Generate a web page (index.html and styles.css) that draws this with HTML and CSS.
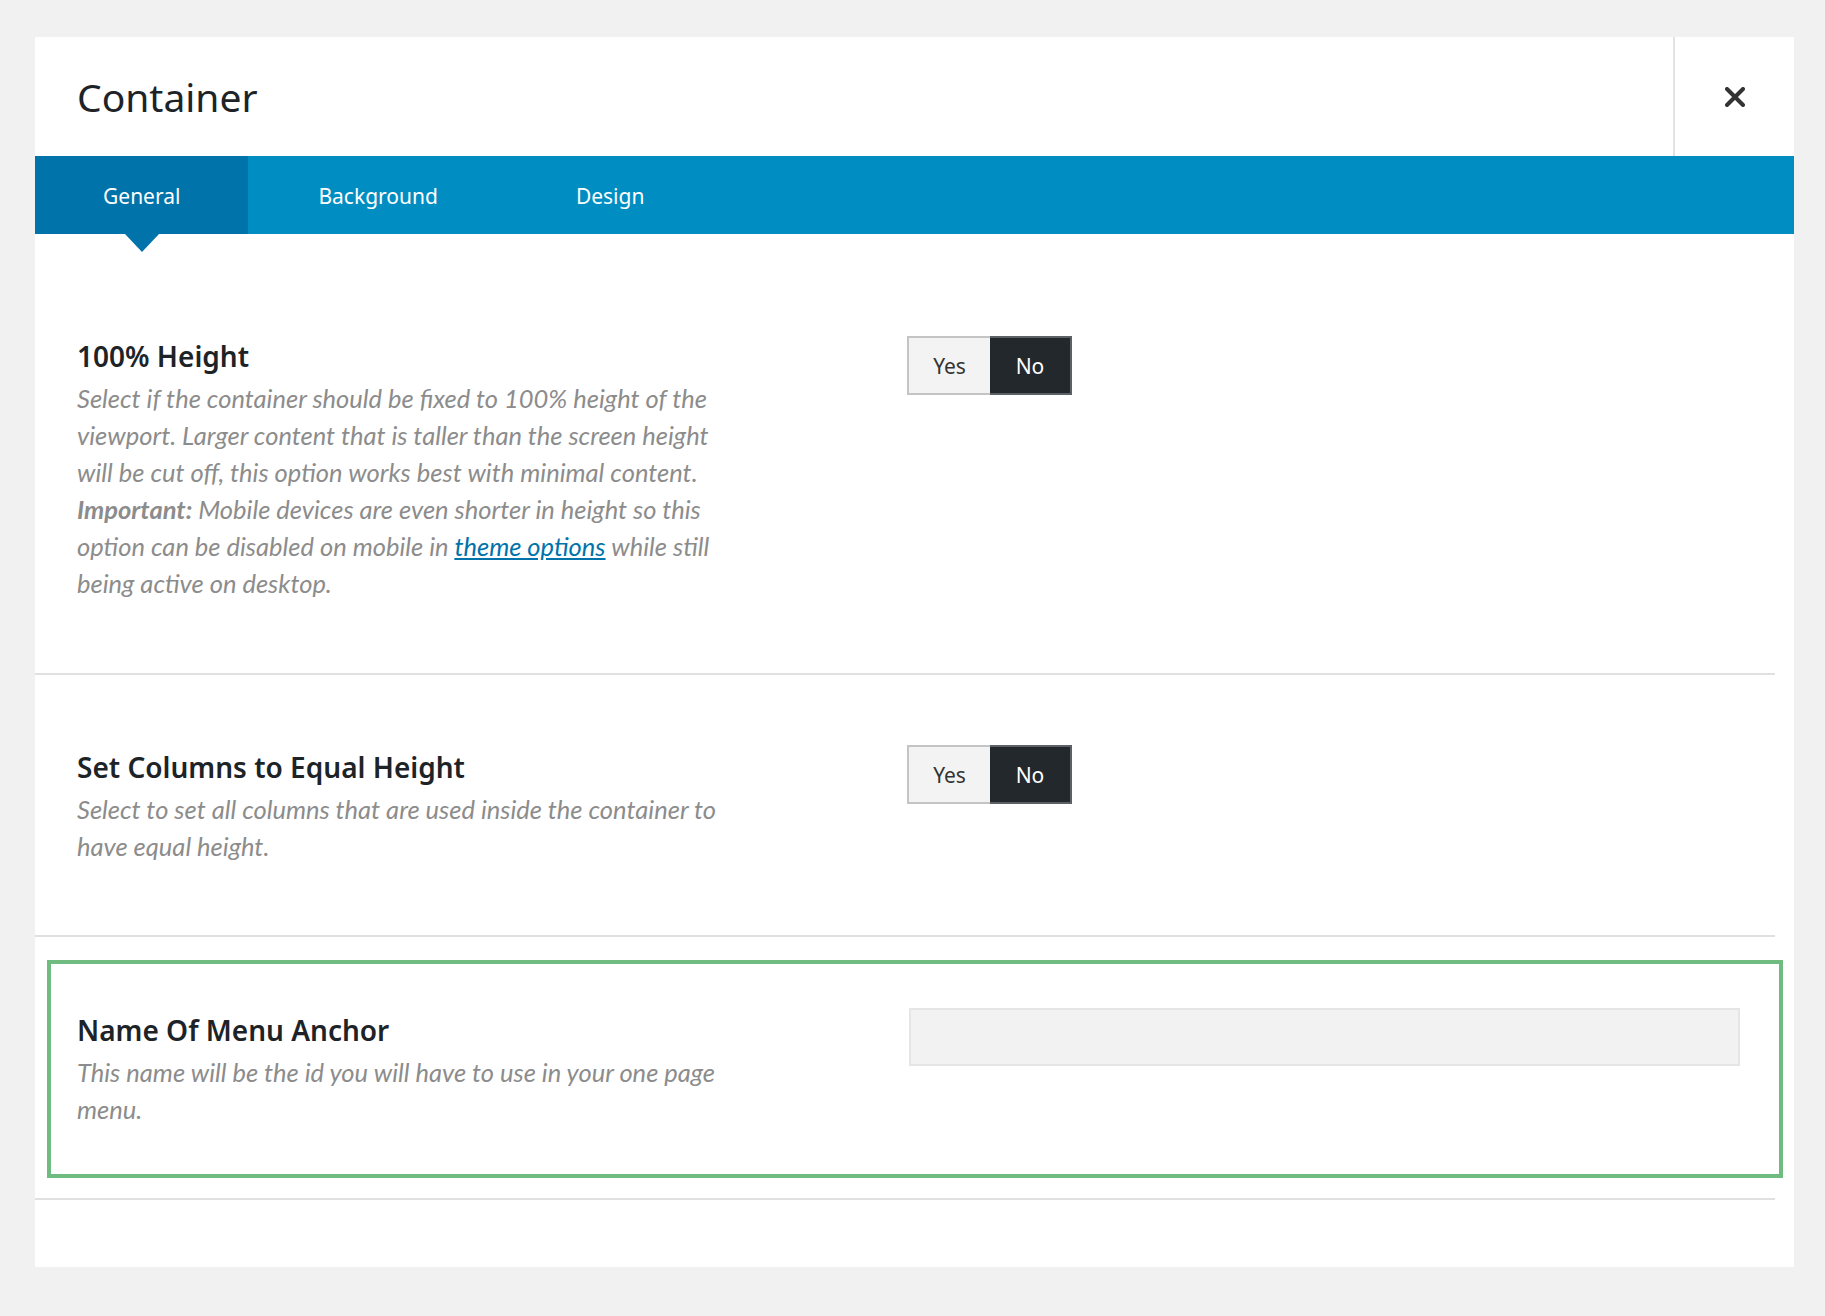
FILE: index.html
```html
<!DOCTYPE html>
<html lang="en">
<head>
    <meta charset="UTF-8">
    <meta name="viewport" content="width=device-width, initial-scale=1.0">
    <title>Container</title>
    <link rel="stylesheet" href="styles.css">
</head>
<body>
    <div class="modal">
        <div class="modal-header">
            <h1>Container</h1>
            <button class="close" aria-label="Close">
                <svg width="20" height="20" viewBox="0 0 20 20">
                    <path d="M2 2 L18 18 M18 2 L2 18" stroke="#333" stroke-width="4" stroke-linecap="round"/>
                </svg>
            </button>
        </div>

        <div class="tabs">
            <a class="tab active">General</a>
            <a class="tab">Background</a>
            <a class="tab">Design</a>
        </div>

        <div class="content">
            <div class="option first">
                <div class="option-info">
                    <h3>100% Height</h3>
                    <p>Select if the container should be fixed to 100% height of the viewport. Larger content that is taller than the screen height will be cut off, this option works best with minimal content. <strong>Important:</strong> Mobile devices are even shorter in height so this option can be disabled on mobile in <a href="#">theme options</a> while still being active on desktop.</p>
                </div>
                <div class="toggle">
                    <span class="yes">Yes</span>
                    <span class="no">No</span>
                </div>
            </div>

            <div class="option">
                <div class="option-info">
                    <h3>Set Columns to Equal Height</h3>
                    <p>Select to set all columns that are used inside the container to have equal height.</p>
                </div>
                <div class="toggle">
                    <span class="yes">Yes</span>
                    <span class="no">No</span>
                </div>
            </div>

            <div class="option-wrap">
                <div class="option highlight">
                    <div class="option-info">
                        <h3>Name Of Menu Anchor</h3>
                        <p>This name will be the id you will have to use in your one page menu.</p>
                    </div>
                    <div>
                        <input type="text" class="text-input">
                    </div>
                </div>
            </div>
        </div>
    </div>
</body>
</html>
```

FILE: styles.css
```css
body {
    margin: 0;
    background-color: #f1f1f1;
    font-family: 'Noto Sans', 'Open Sans', sans-serif;
    min-height: 1316px;
}

.modal {
    width: 1759px;
    margin: 37px 0 0 35px;
    background: #fff;
    padding-bottom: 67px;
}

.modal-header {
    display: flex;
    height: 119px;
}

.modal-header h1 {
    flex: 1;
    margin: 0;
    padding-left: 42px;
    display: flex;
    align-items: center;
    font-size: 39px;
    font-weight: 400;
    color: #1d2327;
}

.close {
    width: 121px;
    border: none;
    border-left: 2px solid #e2e2e2;
    background: #fff;
    display: flex;
    align-items: center;
    justify-content: center;
    padding: 0;
    cursor: pointer;
}

/* tabs */
.tabs {
    display: flex;
    height: 78px;
    background-color: #008ec2;
}

.tab {
    position: relative;
    padding: 0 68px;
    line-height: 80px;
    font-size: 21px;
    color: #fff;
    cursor: pointer;
}

.tab + .tab {
    margin-left: 2px;
}

.tab.active {
    background-color: #0073aa;
}

.tab.active::after {
    content: "";
    position: absolute;
    top: 100%;
    left: 50%;
    margin-left: -17px;
    border-left: 17px solid transparent;
    border-right: 17px solid transparent;
    border-top: 18px solid #0073aa;
}

/* options */
.content {
    width: 1740px;
}

.option {
    display: grid;
    grid-template-columns: 830px 1fr;
    padding: 70px 37px 70px 42px;
    border-bottom: 2px solid #e0e0e0;
}

.option.first {
    padding-top: 100px;
    padding-bottom: 71px;
}

.option h3 {
    margin: 2px 0 0;
    font-size: 28px;
    line-height: 40px;
    font-weight: 600;
    color: #1d2327;
}

.option p {
    margin: 4px 0 0;
    max-width: 665px;
    font-family: 'Lato', sans-serif;
    font-style: italic;
    font-size: 25.5px;
    line-height: 37px;
    color: #8c8c8c;
}

.option p a {
    color: #0073aa;
}

.toggle {
    display: flex;
    align-self: start;
}

.first .toggle {
    margin-top: 2px;
}

.toggle span {
    width: 83px;
    height: 59px;
    box-sizing: border-box;
    display: flex;
    align-items: center;
    justify-content: center;
    font-size: 21px;
}

.toggle .yes {
    background: #f3f3f3;
    color: #333;
    border: 2px solid #c4c4c4;
    border-right: none;
}

.toggle .no {
    width: 82px;
    background: #23282d;
    color: #fff;
    border: 2px solid #5b6166;
    border-left: none;
}

.option-wrap {
    padding: 23px 0 20px;
    border-bottom: 2px solid #e0e0e0;
}

.option.highlight {
    margin: 0 -8px 0 12px;
    padding: 44px 41px 46px 26px;
    border: 4px solid #6fbb80;
}

.text-input {
    display: block;
    width: 100%;
    height: 58px;
    box-sizing: border-box;
    margin-left: 2px;
    background: #f3f2f2;
    border: 2px solid #e6e4e4;
}
```
